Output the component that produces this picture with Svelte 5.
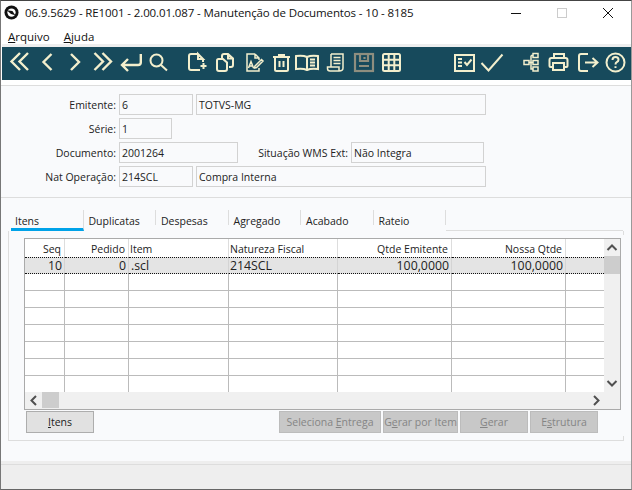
<script>
  const headers = [
    { t: 'Seq', r: true }, { t: 'Pedido', r: true }, { t: 'Item' }, { t: 'Natureza Fiscal' },
    { t: 'Qtde Emitente', r: true }, { t: 'Nossa Qtde', r: true }, { t: '' }
  ];
  const emptyRows = [1, 2, 3, 4, 5, 6, 7];
  const tabs = ['Itens', 'Duplicatas', 'Despesas', 'Agregado', 'Acabado', 'Rateio'];
</script>

<div class="window">
  <header class="titlebar">
    <svg class="logo" viewBox="0 0 16 16" width="15" height="15">
      <circle cx="8" cy="8" r="7.500" fill="#111" />
      <circle cx="8" cy="8" r="4.400" fill="#fff" />
      <path d="M3 5.500 L9 6.500 L12 11 L7.500 9.500 Z" fill="#111" />
    </svg>
    <span class="title">06.9.5629 - RE1001 - 2.00.01.087 - Manutenção de Documentos - 10 - 8185</span>
    <div class="winctl">
      <span class="ctl"><svg width="12" height="12" viewBox="0 0 12 12"><path d="M1 6.500H11" stroke="#111" stroke-width="1" /></svg></span>
      <span class="ctl"><svg width="12" height="12" viewBox="0 0 12 12"><rect x="1.500" y="1.500" width="9" height="9" fill="none" stroke="#ccc" /></svg></span>
      <span class="ctl"><svg width="12" height="12" viewBox="0 0 12 12"><path d="M1 1L11 11M11 1L1 11" stroke="#111" stroke-width="1" /></svg></span>
    </div>
  </header>

  <nav class="menu">
    <span><u>A</u>rquivo</span>
    <span><u>A</u>juda</span>
  </nav>

  <div class="toolbar">
    <div class="group g1">
      <svg class="ic" viewBox="0 0 28 33"><path d="M15 6L6.500 14.500L15 23M23 6L14.500 14.500L23 23" /></svg>
      <svg class="ic" viewBox="0 0 28 33"><path d="M18.500 7L10.500 15L18.500 23" /></svg>
      <svg class="ic" viewBox="0 0 28 33"><path d="M10 7L18 15L10 23" /></svg>
      <svg class="ic" viewBox="0 0 28 33"><path d="M5.500 6L14 14.500L5.500 23M13.500 6L22 14.500L13.500 23" /></svg>
      <svg class="ic" viewBox="0 0 28 33"><path d="M23.800 7V15.500Q23.800 18 21 18H5M11 12L5 18L11 24" /></svg>
      <svg class="ic thin" viewBox="0 0 28 33"><circle cx="11.500" cy="13.500" r="6" /><path d="M16 18L22 23.500" /></svg>
    </div>
    <div class="group g2">
      <svg class="ic thin" viewBox="0 0 28 33"><path d="M14 7H7Q5 7 5 9V21Q5 23 7 23H16M14 7V12H19L14 7ZM19 12V15M16.500 19H22.500M19.500 16V22" /></svg>
      <svg class="ic thin" viewBox="0 0 28 33"><path d="M10 11V9Q10 7 12 7H16L21 11.500V18Q21 20 19 20H17M16 7V11.500H21M6.500 12H11L15 15.500V22Q15 24 13 24H7Q5 24 5 22V13.500Q5 12 6.500 12Z" /></svg>
      <svg class="ic thin2" viewBox="0 0 28 33"><path d="M15 7H7V24H19V21M15 7L19 11V13M15 7V11H19M8.500 21L11 14.500L13.500 21M9.500 19H12.500M15 19L21.500 12.500L23 14L16.500 20.500L14.500 21Z" /></svg>
      <svg class="ic thin" viewBox="0 0 28 33"><path d="M5 10H22M11 10V8H16V10M7 10V22.500Q7 24 8.500 24H18.500Q20 24 20 22.500V10M11.500 14V20M15.500 14V20" /></svg>
      <svg class="ic thin" viewBox="0 0 28 33"><path d="M11 10Q7 8 0 9V22Q7 21 11 23Q15 21 22 22V9Q15 8 11 10ZM11 10V23M14 12.500H19M14 15.500H19M14 18.500H19" /></svg>
      <svg class="ic thin2" viewBox="0 0 28 33"><path d="M7 7H19V21M7 7V20M5 20H15V24H6Q3.500 24 3.500 21.500V20H5ZM15 24Q19 24 19 21M9.500 10.500H16.500M9.500 13.500H16.500M9.500 16.500H16.500" /></svg>
      <svg class="ic off" viewBox="0 0 28 33"><rect x="3" y="7" width="18" height="17" /><path d="M8 7V14H16V7M12.500 10V12M7 19H17" /></svg>
      <svg class="ic thin" viewBox="0 0 28 33"><rect x="3" y="7" width="17" height="17" rx="1.500" /><path d="M8.700 7V24M14.300 7V24M3 12.700H20M3 18.300H20" /></svg>
    </div>
    <div class="group g3">
      <svg class="ic thin" viewBox="0 0 28 33"><rect x="5" y="8" width="19" height="16" /><path d="M8 12H12M8 15.500H12M8 19H12M14.500 15L17 18L21.500 12.500" /></svg>
      <svg class="ic thin" viewBox="0 0 28 33"><path d="M3.500 16L10.500 23.500L24.500 7.500" /></svg>
    </div>
    <div class="group g4">
      <svg class="ic thin2" viewBox="0 0 28 33"><rect x="15" y="6.500" width="5" height="4" /><rect x="15" y="13.500" width="5" height="4" /><rect x="15" y="20" width="5" height="4" /><rect x="6" y="13.500" width="5" height="4" /><path d="M11 15.500H15M13 8.500V22H15M13 8.500H15" /></svg>
      <svg class="ic thin" viewBox="0 0 28 33"><path d="M8 11V7H18V11M6 20H4.500Q3.500 20 3.500 19V13Q3.500 11 5.500 11H19.500Q21.500 11 21.500 13V19Q21.500 20 20.500 20H19M7 16H18V23H7Z" /></svg>
      <svg class="ic thin" viewBox="0 0 28 33"><path d="M14 7H7Q5 7 5 9V22Q5 24 7 24H14M11 15.500H23M18.500 11L23.500 15.500L18.500 20" /></svg>
      <svg class="ic thin" viewBox="0 0 28 33"><circle cx="13.500" cy="15.500" r="9" /><path d="M10.500 13Q10.500 10 13.500 10Q16.500 10 16.500 12.700Q16.500 14.200 14.800 15.200Q13.500 16 13.500 17.500M13.500 19.200V21" /></svg>
    </div>
  </div>

  <section class="form">
    <div class="row">
      <label>Emitente:</label>
      <span class="field w74">6</span>
      <span class="field w290">TOTVS-MG</span>
    </div>
    <div class="row">
      <label>Série:</label>
      <span class="field w53">1</span>
    </div>
    <div class="row">
      <label>Documento:</label>
      <span class="field w119">2001264</span>
      <label class="sit">Situação WMS Ext:</label>
      <span class="field w133">Não Integra</span>
    </div>
    <div class="row">
      <label>Nat Operação:</label>
      <span class="field w74">214SCL</span>
      <span class="field w290">Compra Interna</span>
    </div>
  </section>

  <section class="tabarea">
    <div class="tabs">
      {#each tabs as tab, i}
        <div class="tab" class:active={i === 0}>{tab}</div>
      {/each}
      <div class="tabfill"></div>
    </div>

    <div class="pane">
      <div class="gridbox">
        <div class="gridmain">
          <div class="tablewrap">
            <table>
              <colgroup>
                <col class="c1" /><col class="c2" /><col class="c3" /><col class="c4" /><col class="c5" /><col class="c5" /><col class="c6" />
              </colgroup>
              <thead>
                <tr>
                  {#each headers as h}
                    <th class:right={h.r}>{h.t}</th>
                  {/each}
                </tr>
              </thead>
              <tbody>
                <tr class="sel">
                  <td class="right">10</td><td class="right">0</td><td class="scl">.scl</td><td>214SCL</td>
                  <td class="right">100,0000</td><td class="right">100,0000</td><td></td>
                </tr>
                {#each emptyRows as r}
                  <tr>
                    <td></td><td></td><td></td><td></td><td></td><td></td><td></td>
                  </tr>
                {/each}
              </tbody>
            </table>
          </div>
          <div class="vscroll">
            <svg width="16" height="17" viewBox="0 0 16 17"><path d="M3.500 11L8 6.500L12.500 11" class="arrow" /></svg>
            <div class="vthumb"></div>
            <div class="spacer"></div>
            <svg width="16" height="17" viewBox="0 0 16 17"><path d="M3.500 6L8 10.500L12.500 6" class="arrow" /></svg>
          </div>
        </div>
        <div class="hscroll">
          <svg width="16" height="17" viewBox="0 0 16 17"><path d="M10 4L5.500 8.500L10 13" class="arrow" /></svg>
          <div class="hthumb"></div>
          <div class="spacer"></div>
          <svg width="16" height="17" viewBox="0 0 16 17"><path d="M6 4L10.500 8.500L6 13" class="arrow" /></svg>
        </div>
      </div>

      <div class="buttons">
        <button class="btn itens"><u>I</u>tens</button>
        <div class="spacer"></div>
        <button class="btn off w102">Seleciona <u>E</u>ntrega</button>
        <button class="btn off w75">G<u>e</u>rar por Item</button>
        <button class="btn off w68"><u>G</u>erar</button>
        <button class="btn off w68">E<u>s</u>trutura</button>
      </div>
      <i class="tick top"></i>
      <i class="tick bottom"></i>
    </div>
  </section>

  <footer class="status"></footer>
</div>

<style>
  :global(body) { margin: 0; background: #fff; }
  * { box-sizing: border-box; }
  .window {
    width: 632px; height: 490px; display: flex; flex-direction: column; overflow: hidden;
    border-left: 1px solid #777; border-bottom: 1px solid #666; border-top: 1px solid #444;
    border-right: 1px solid #999;
    font-family: "Open Sans", "Noto Sans", sans-serif; font-size: 11.5px; color: #1a1a1a; background: #fff;
  }
  .titlebar { height: 27px; flex: none; display: flex; align-items: center; padding-left: 3px; padding-bottom: 5px; }
  .title { margin-left: 6px; font-size: 11.500px; letter-spacing: -0.115px; color: #111; white-space: nowrap; }
  .winctl { margin-left: auto; display: flex; margin-top: 1px; }
  .ctl { width: 46px; display: flex; justify-content: center; }
  .menu { height: 16px; flex: none; display: flex; gap: 14px; padding-left: 7px; align-items: center; font-size: 11.500px; color: #111; }
  .toolbar {
    height: 36px; flex: none; display: flex; background: #174a5c; margin: 0 0 0 1px; border-top: 3px solid #eee;
  }
  .group { display: flex; }
  .g1 { margin-left: 3px; }
  .g2 { margin-left: 11px; }
  .g3 { margin-left: 42px; }
  .g4 { margin-left: 12px; }
  .ic { width: 28px; height: 33px; fill: none; stroke: #f3efcd; stroke-width: 2.4; overflow: visible; display: block; flex: none; }
  .ic.thin { stroke-width: 2; }
  .ic.thin2 { stroke-width: 1.500; }
  .ic.off { stroke: #8e8e7f; stroke-width: 2.200; }

  .form {
    height: 113px; flex: none; margin-top: 5px; border-top: 1px solid #ddd; border-bottom: 1px solid #ddd;
    background: #f9fafc; padding: 8px 0 0 0; display: flex; flex-direction: column; gap: 3px;
  }
  .row { display: flex; align-items: center; height: 21px; }
  label { width: 118px; text-align: right; flex: none; padding-right: 3px; font-size: 10.500px; color: #222; }
  label.sit { width: 110px; padding-right: 3px; }
  .field {
    height: 21px; border: 1px solid #d2d2d2; background: #f9fafc; padding: 3px 0 0 2px; font-size: 10.500px;
    display: block; white-space: nowrap; margin-right: 3px; color: #222;
  }
  .w74 { width: 74px; }
  .w290 { width: 290px; }
  .w53 { width: 53px; }
  .w119 { width: 119px; }
  .w133 { width: 133px; }

  .tabarea { flex: 1; background: #f9fafc; padding: 12px 8px 0 7px; display: flex; flex-direction: column; }
  .tabs { display: flex; height: 21px; flex: none; padding-left: 3px; }
  .tab {
    width: 72.500px; height: 21px; font-size: 10.500px; padding: 4px 0 0 5px; border-right: 1px solid #ddd; color: #222;
  }
  .tab.active { border-right-color: #ddd; border-bottom: 3px solid #00a2e8; padding-left: 4px; }
  .tab:not(.active) { border-image: linear-gradient(#ddd 70%, transparent 70%) 1; }
  .tabfill { flex: 1; border-bottom: 1px solid #ddd; }

  .pane {
    position: relative; flex: none; height: 210px; border-left: 1px solid #ddd; border-bottom: 1px solid #ddd;
    padding: 7px 2px 0 15px; margin-right: -1px;
  }
  .tick { position: absolute; right: 0; width: 1px; height: 4px; background: #ddd; }
  .tick.top { top: 0; }
  .tick.bottom { bottom: 0; }

  .gridbox { width: 597px; height: 172px; border: 1px solid #aaa; background: #f0f0f0; }
  .gridmain { display: flex; height: 153px; }
  .tablewrap { width: 579px; height: 153px; overflow: hidden; background: #fff; flex: none; }
  table { border-collapse: separate; border-spacing: 0; table-layout: fixed; width: 579px; }
  .c1 { width: 40px; } .c2 { width: 64px; } .c3 { width: 100px; } .c4 { width: 109px; } .c5 { width: 114px; } .c6 { width: 38px; }
  th, td {
    padding: 0 2px 0 1px; font-weight: 400; text-align: left; overflow: hidden; white-space: nowrap; color: #222;
    border-right: 1px solid #bbb; border-bottom: 1px solid #bbb;
  }
  td { height: 17px; font-size: 12.300px; line-height: 15px; }
  th { height: 18px; font-size: 10.500px; line-height: 15px; padding-top: 2px; border-bottom: none; border-right-color: #ddd; }
  th.right { padding-right: 3px; }
  th:last-child, td:last-child { border-right: none; }
  .right { text-align: right; }
  .sel td {
    background: #e4e4e4; border-top: 1px dotted #111; border-bottom: 1px dotted #111; border-right-color: #d4d4d4; height: 17px;
  }
  .scl { padding-left: 2px; }
  .vscroll { width: 16px; display: flex; flex-direction: column; background: #f0f0f0; flex: none; }
  .vthumb { height: 18px; background: #cdcdcd; flex: none; }
  .vscroll svg { flex: none; display: block; }
  .spacer { flex: 1; }
  .hscroll { height: 17px; display: flex; background: #f0f0f0; padding-left: 1px; padding-right: 16px; }
  .hthumb { width: 17px; background: #cdcdcd; margin-bottom: 1px; }
  .arrow { fill: none; stroke: #505050; stroke-width: 2; }

  .buttons { display: flex; gap: 2px; height: 22px; width: 572px; margin-top: 1px; margin-left: 2px; }
  .btn {
    height: 22px; padding: 0; font: inherit; font-size: 10.500px; border: 1px solid #adadad; background: #e1e1e1; color: #222; white-space: nowrap;
  }
  .itens { width: 68px; }
  .btn.off { background: #c8c8c8; border-color: #bcbcbc; color: #858585; }
  .w102 { width: 102px; }
  .w75 { width: 75px; }
  .w68 { width: 68px; }

  .status { height: 25px; flex: none; background: #eee; border-top: 1px solid #ddd; box-shadow: 0 -3px 0 #eee; }
</style>
